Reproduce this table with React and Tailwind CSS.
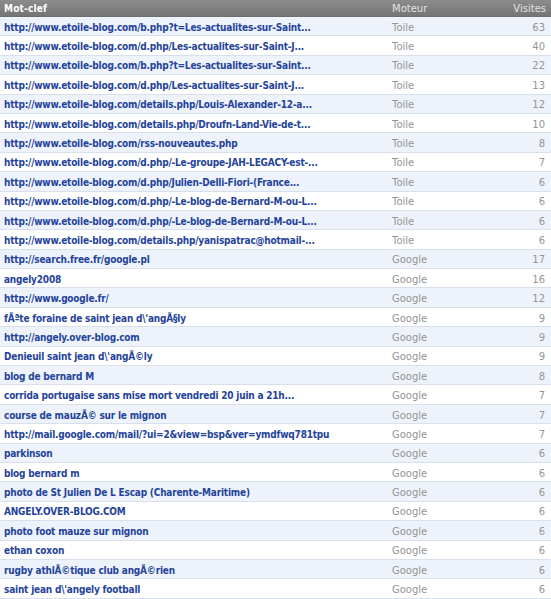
import React from "react";

const rows = [
  ["http://www.etoile-blog.com/b.php?t=Les-actualites-sur-Saint...", "Toile", 63],
  ["http://www.etoile-blog.com/d.php/Les-actualites-sur-Saint-J...", "Toile", 40],
  ["http://www.etoile-blog.com/b.php?t=Les-actualites-sur-Saint...", "Toile", 22],
  ["http://www.etoile-blog.com/d.php/Les-actualites-sur-Saint-J...", "Toile", 13],
  ["http://www.etoile-blog.com/details.php/Louis-Alexander-12-a...", "Toile", 12],
  ["http://www.etoile-blog.com/details.php/Droufn-Land-Vie-de-t...", "Toile", 10],
  ["http://www.etoile-blog.com/rss-nouveautes.php", "Toile", 8],
  ["http://www.etoile-blog.com/d.php/-Le-groupe-JAH-LEGACY-est-...", "Toile", 7],
  ["http://www.etoile-blog.com/d.php/Julien-Delli-Fiori-(France...", "Toile", 6],
  ["http://www.etoile-blog.com/d.php/-Le-blog-de-Bernard-M-ou-L...", "Toile", 6],
  ["http://www.etoile-blog.com/d.php/-Le-blog-de-Bernard-M-ou-L...", "Toile", 6],
  ["http://www.etoile-blog.com/details.php/yanispatrac@hotmail-...", "Toile", 6],
  ["http://search.free.fr/google.pl", "Google", 17],
  ["angely2008", "Google", 16],
  ["http://www.google.fr/", "Google", 12],
  ["fÃªte foraine de saint jean d\\'angÃ§ly", "Google", 9],
  ["http://angely.over-blog.com", "Google", 9],
  ["Denieuil saint jean d\\'angÃ©ly", "Google", 9],
  ["blog de bernard M", "Google", 8],
  ["corrida portugaise sans mise mort vendredi 20 juin a 21h...", "Google", 7],
  ["course de mauzÃ© sur le mignon", "Google", 7],
  ["http://mail.google.com/mail/?ui=2&view=bsp&ver=ymdfwq781tpu", "Google", 7],
  ["parkinson", "Google", 6],
  ["blog bernard m", "Google", 6],
  ["photo de St Julien De L Escap (Charente-Maritime)", "Google", 6],
  ["ANGELY.OVER-BLOG.COM", "Google", 6],
  ["photo foot mauze sur mignon", "Google", 6],
  ["ethan coxon", "Google", 6],
  ["rugby athlÃ©tique club angÃ©rien", "Google", 6],
  ["saint jean d\\'angely football", "Google", 6],
];

export default function App() {
  return (
    <div className="w-[551px] h-[599px] overflow-hidden bg-white font-['DejaVu_Sans',sans-serif]">
      <div className="flex h-[17px] items-center border-b border-[#6e6e6e] bg-gradient-to-b from-[#8c8c8c] to-[#757575] text-[10px] text-white">
        <div className="flex-1 pl-[4px] font-['DejaVu_Sans_Condensed','DejaVu_Sans',sans-serif] font-bold tracking-[0.2px]">Mot-clef</div>
        <div className="w-[110px] text-[#e2e2e2]">Moteur</div>
        <div className="w-[49px] pr-[5px] text-right text-[#e2e2e2]">Visites</div>
      </div>
      {rows.map(([k, m, v], i) => (
        <div
          key={i}
          className={`flex h-[19.4px] items-center border-b border-[#d8e0ec] pt-[2px] text-[10px] ${i % 2 === 0 ? "bg-[#eef3fb]" : "bg-white"}`}
        >
          <div className="flex-1 whitespace-nowrap pl-[4px] font-['DejaVu_Sans_Condensed','DejaVu_Sans',sans-serif] font-bold tracking-[-0.2px] text-[#24439a]">{k}</div>
          <div className="w-[110px] text-[#959595]">{m}</div>
          <div className="w-[49px] pr-[6px] text-right text-[#959595]">{v}</div>
        </div>
      ))}
    </div>
  );
}
